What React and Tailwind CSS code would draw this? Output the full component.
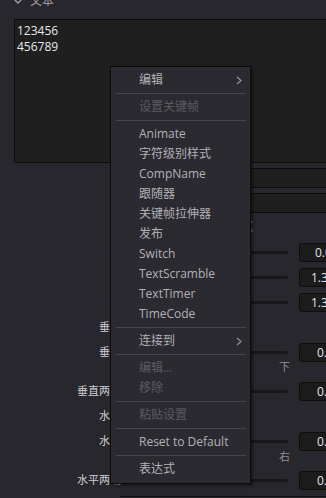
import React from "react";

const menuItems = [
  { label: "编辑", sub: true },
  { sep: true },
  { label: "设置关键帧", disabled: true },
  { sep: true },
  { label: "Animate" },
  { label: "字符级别样式" },
  { label: "CompName" },
  { label: "跟随器" },
  { label: "关键帧拉伸器" },
  { label: "发布" },
  { label: "Switch" },
  { label: "TextScramble" },
  { label: "TextTimer" },
  { label: "TimeCode" },
  { sep: true },
  { label: "连接到", sub: true },
  { sep: true },
  { label: "编辑...", disabled: true },
  { label: "移除", disabled: true },
  { sep: true },
  { label: "粘贴设置", disabled: true },
  { sep: true },
  { label: "Reset to Default" },
  { sep: true },
  { label: "表达式" },
];

function Chevron() {
  return (
    <svg width="6" height="9" viewBox="0 0 6 9" className="shrink-0">
      <polyline points="1,1 5,4.5 1,8" fill="none" stroke="#8e8d94" strokeWidth="1.3" />
    </svg>
  );
}

function ContextMenu() {
  return (
    <div className="absolute left-[110px] top-[66px] w-[141px] bg-[#2b2a31] border border-[#0b0b0c] pt-[3px] pb-[4px] shadow-[2px_2px_3px_rgba(0,0,0,0.45)]">
      {menuItems.map((item, i) =>
        item.sep ? (
          <div key={i} className="h-[7px] pt-[3px]">
            <div className="ml-[5px] mr-[4px] h-px bg-[#47464d]" />
          </div>
        ) : (
          <div
            key={i}
            className={`h-[20px] leading-[20px] pl-[28px] pr-[8px] flex items-center justify-between ${
              item.disabled ? "text-[#5c5b62]" : "text-[#b2b1b6]"
            }`}
          >
            <span>{item.label}</span>
            {item.sub && <Chevron />}
          </div>
        )
      )}
    </div>
  );
}

function Row({ label, value, pad = "pl-[15px]" }) {
  return (
    <div className="h-[25px] flex items-center">
      <div className="w-[121px] shrink-0 text-right text-[11px] text-[#cfced3]">{label}</div>
      {value !== undefined ? (
        <>
          <div className="ml-[9px] w-[158px] shrink-0 h-[3px] rounded-full bg-[#18181a]" />
          <div
            className={`ml-[11px] w-[60px] shrink-0 h-[19px] leading-[17px] rounded-[3px] border border-[#0e0e0f] bg-[#1c1c1d] text-[#e4e4e4] ${pad}`}
          >
            {value}
          </div>
        </>
      ) : null}
    </div>
  );
}

function SubLabel({ text, cls }) {
  return (
    <div className={`h-[14px] leading-[14px] pl-[279px] text-[11px] text-[#8d8c98] ${cls}`}>{text}</div>
  );
}

export default function App() {
  return (
    <div className="relative w-[326px] h-[498px] overflow-hidden bg-[#28272d] text-[12px] font-['Open_Sans','Noto_Sans_CJK_SC',sans-serif]">
      <div className="h-[19px] flex flex-col">
        <div className="-mt-[8px] h-[17px] flex items-center pl-[13px] gap-[7px] text-[#9c9ba2]">
          <svg width="10" height="6" viewBox="0 0 10 6" className="shrink-0">
            <polyline points="1,1 5,5 9,1" fill="none" stroke="#9c9ba2" strokeWidth="1.4" />
          </svg>
          <span>文本</span>
        </div>
      </div>

      <div className="ml-[14px] w-[330px] h-[144px] border border-r-0 border-[#0d0d0e] bg-[#1f1f1f] pt-[3px] pl-[2px] leading-[16px] text-[#e8e8e8]">
        <div>123456</div>
        <div>456789</div>
      </div>

      <div className="mt-[5px] ml-[120px] h-[20px] border border-r-0 border-[#0d0d0e] bg-[#1f1f1f]" />
      <div className="mt-[5px] ml-[120px] h-[20px] border border-r-0 border-[#0d0d0e] bg-[#1f1f1f]" />

      <div className="h-[27px] flex items-center">
        <div className="w-[253px] text-right text-[12px] text-[#8a8990]">字符样式</div>
      </div>

      <Row label="缩" value="0.00" />
      <Row label="距" value="1.30" pad="pl-[11px]" />
      <Row label="行" value="1.30" pad="pl-[11px]" />
      <Row label="垂直" />
      <Row label="垂直" value="0.50" pad="pl-[17px]" />
      <SubLabel text="下" cls="-mt-[5px] mb-[5px]" />
      <Row label="垂直两端" value="0.50" pad="pl-[17px]" />
      <Row label="水平" />
      <Row label="水平" value="0.50" pad="pl-[17px]" />
      <SubLabel text="右" cls="-mt-[4px] mb-[4px]" />
      <Row label="水平两端" value="0.50" pad="pl-[17px]" />

      <div className="mt-[3px] ml-[120px] h-[10px] border-t border-[#111113]" />

      <ContextMenu />
    </div>
  );
}
